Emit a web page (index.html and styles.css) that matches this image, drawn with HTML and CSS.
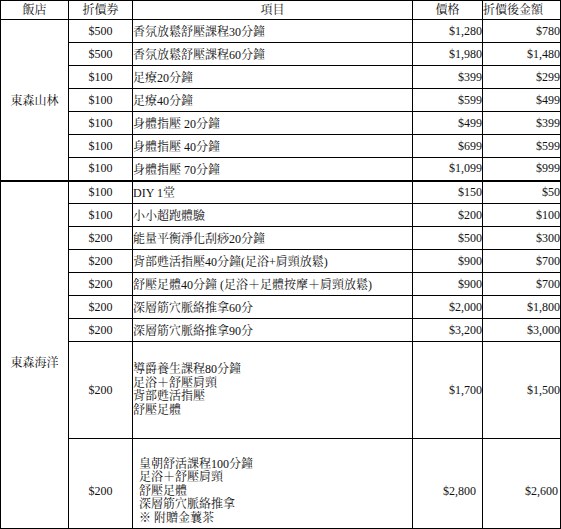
FILE: index.html
```html
<!DOCTYPE html>
<html lang="zh-Hant">
<head>
<meta charset="utf-8">
<title>飯店折價券</title>
<link rel="stylesheet" href="styles.css">
</head>
<body>
<table class="price-table">
  <colgroup>
    <col class="c-hotel">
    <col class="c-coupon">
    <col class="c-item">
    <col class="c-price">
    <col class="c-final">
  </colgroup>
  <thead>
    <tr class="head-row">
      <th class="h-center">飯店</th>
      <th class="h-center">折價券</th>
      <th class="h-center">項目</th>
      <th class="h-center">價格</th>
      <th class="h-final">折價後金額</th>
    </tr>
  </thead>
  <tbody>
    <tr class="row">
      <td class="hotel" rowspan="7">東森山林</td>
      <td class="coupon">$500</td>
      <td class="item">香氛放鬆舒壓課程30分鐘</td>
      <td class="price">$1,280</td>
      <td class="final">$780</td>
    </tr>
    <tr class="row">
      <td class="coupon">$500</td>
      <td class="item">香氛放鬆舒壓課程60分鐘</td>
      <td class="price">$1,980</td>
      <td class="final">$1,480</td>
    </tr>
    <tr class="row">
      <td class="coupon">$100</td>
      <td class="item">足療20分鐘</td>
      <td class="price">$399</td>
      <td class="final">$299</td>
    </tr>
    <tr class="row">
      <td class="coupon">$100</td>
      <td class="item">足療40分鐘</td>
      <td class="price">$599</td>
      <td class="final">$499</td>
    </tr>
    <tr class="row">
      <td class="coupon">$100</td>
      <td class="item">身體指壓 20分鐘</td>
      <td class="price">$499</td>
      <td class="final">$399</td>
    </tr>
    <tr class="row">
      <td class="coupon">$100</td>
      <td class="item">身體指壓 40分鐘</td>
      <td class="price">$699</td>
      <td class="final">$599</td>
    </tr>
    <tr class="row">
      <td class="coupon">$100</td>
      <td class="item">身體指壓 70分鐘</td>
      <td class="price">$1,099</td>
      <td class="final">$999</td>
    </tr>
    <tr class="row group-start">
      <td class="hotel hotel-ocean" rowspan="9">東森海洋</td>
      <td class="coupon">$100</td>
      <td class="item">DIY 1堂</td>
      <td class="price">$150</td>
      <td class="final">$50</td>
    </tr>
    <tr class="row">
      <td class="coupon">$100</td>
      <td class="item">小小超跑體驗</td>
      <td class="price">$200</td>
      <td class="final">$100</td>
    </tr>
    <tr class="row">
      <td class="coupon">$200</td>
      <td class="item">能量平衡淨化刮痧20分鐘</td>
      <td class="price">$500</td>
      <td class="final">$300</td>
    </tr>
    <tr class="row">
      <td class="coupon">$200</td>
      <td class="item">背部甦活指壓40分鐘(足浴+肩頸放鬆)</td>
      <td class="price">$900</td>
      <td class="final">$700</td>
    </tr>
    <tr class="row">
      <td class="coupon">$200</td>
      <td class="item">舒壓足體40分鐘 (足浴＋足體按摩＋肩頸放鬆)</td>
      <td class="price">$900</td>
      <td class="final">$700</td>
    </tr>
    <tr class="row">
      <td class="coupon">$200</td>
      <td class="item">深層筋穴脈絡推拿60分</td>
      <td class="price">$2,000</td>
      <td class="final">$1,800</td>
    </tr>
    <tr class="row">
      <td class="coupon">$200</td>
      <td class="item">深層筋穴脈絡推拿90分</td>
      <td class="price">$3,200</td>
      <td class="final">$3,000</td>
    </tr>
    <tr class="row-tall">
      <td class="coupon">$200</td>
      <td class="item multi">導爵養生課程80分鐘<br>足浴＋舒壓肩頸<br>背部甦活指壓<br>舒壓足體</td>
      <td class="price">$1,700</td>
      <td class="final">$1,500</td>
    </tr>
    <tr class="row-last">
      <td class="coupon">$200</td>
      <td class="item multi">皇朝舒活課程100分鐘<br>足浴＋舒壓肩頸<br>舒壓足體<br>深層筋穴脈絡推拿<br>※ 附贈金蘘茶</td>
      <td class="price">$2,800</td>
      <td class="final">$2,600</td>
    </tr>
  </tbody>
</table>
</body>
</html>
```

FILE: styles.css
```css
html, body {
  margin: 0;
  padding: 0;
  background: #ffffff;
}

body {
  font-family: "Liberation Serif", "Noto Serif CJK TC", "AR PL UMing TW", "Noto Sans CJK TC", serif;
  font-size: 12px;
  color: #111111;
}

.price-table {
  border-collapse: collapse;
  table-layout: fixed;
  width: 560px;
}

.c-hotel { width: 68px; }
.c-coupon { width: 64px; }
.c-item { width: 280px; }
.c-price { width: 70px; }
.c-final { width: 78px; }

.price-table th,
.price-table td {
  border: 1px solid #000000;
  padding: 0;
  vertical-align: middle;
  white-space: nowrap;
  overflow: hidden;
}

.head-row { height: 19px; }
.row { height: 23px; }
.row-tall { height: 97px; }
.row-last { height: 90px; }

.price-table th {
  font-weight: normal;
  line-height: 14px;
}

.h-center { text-align: center; }
.h-final { text-align: left; padding-left: 5px; }

.hotel {
  text-align: center;
  padding-right: 2px;
}

.price-table td.hotel-ocean {
  vertical-align: top;
  padding-top: 174px;
  line-height: 14px;
}

.coupon { text-align: center; }

.item {
  text-align: left;
  padding-left: 6px;
}

.multi { line-height: 13.5px; }

.price {
  text-align: right;
  padding-right: 6px;
}

.final {
  text-align: right;
  padding-right: 2px;
}

.group-start td { border-top: 2px solid #000000; }

.row-last td { padding-top: 16px; }
.row-last td.item { padding-left: 6px; }
.row-last td.price { padding-right: 6px; }
.row-last td.final { padding-right: 2px; }
```
